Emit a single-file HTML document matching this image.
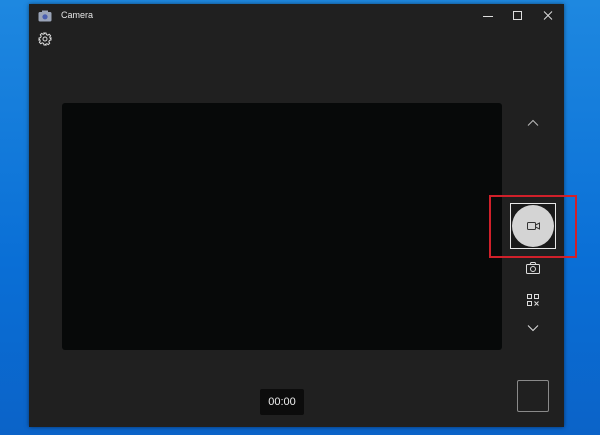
<!DOCTYPE html>
<html><head><style>
body{margin:0;width:600px;height:435px;overflow:hidden;background:linear-gradient(180deg,#1e88e0 0%,#0a6fd6 60%,#0b63c8 100%);font-family:"Liberation Sans",sans-serif;position:relative}
.win{position:absolute;left:29px;top:4px;width:535px;height:423px;background:#202020;box-shadow:0 0 4px rgba(0,0,0,.5)}
.a{position:absolute}
</style></head><body>
<div class="win"></div>
<!-- title -->
<svg class="a" style="left:38px;top:10px" width="14" height="12"><rect x="0.5" y="2" width="13" height="9.5" rx="1.5" fill="#9aa4b8"/><rect x="4" y="0.5" width="6" height="2" fill="#9aa4b8"/><circle cx="7" cy="6.8" r="2.6" fill="#4a5fb0"/></svg>
<div class="a" style="left:61px;top:10px;font-size:9px;color:#e6e6e6">Camera</div>
<svg class="a" style="left:480px;top:10px" width="80" height="12" stroke="#ddd" fill="none" stroke-width="1"><line x1="3" y1="6.5" x2="13" y2="6.5"/><rect x="33.5" y="1.5" width="8" height="8"/><path d="M64 1.5l8 8M72 1.5l-8 8"/></svg>
<!-- settings gear -->
<svg class="a" style="left:38px;top:32px" width="14" height="14" viewBox="0 0 14 14" fill="none" stroke="#ddd" stroke-width="1"><circle cx="7" cy="7" r="2"/><path d="M6 1h2l.4 1.6 1.4.6 1.4-.9 1.4 1.4-.9 1.4.6 1.4L13 6v2l-1.6.4-.6 1.4.9 1.4-1.4 1.4-1.4-.9-1.4.6L8 13H6l-.4-1.6-1.4-.6-1.4.9-1.4-1.4.9-1.4-.6-1.4L1 8V6l1.6-.4.6-1.4-.9-1.4 1.4-1.4 1.4.9 1.4-.6z"/></svg>
<!-- preview -->
<div class="a" style="left:62px;top:103px;width:440px;height:247px;background:#070909;border-radius:3px"></div>
<!-- up chevron -->
<svg class="a" style="left:527px;top:119px" width="12" height="8" fill="none" stroke="#bbb" stroke-width="1"><path d="M1 6.5l5-5 5 5"/></svg>
<!-- red box -->
<div class="a" style="left:489px;top:195px;width:84px;height:59px;border:2px solid #d0202a"></div>
<div class="a" style="left:510px;top:203px;width:44px;height:44px;border:1.5px solid #e8e8e8;background:#1a1a1a"></div>
<div class="a" style="left:512px;top:205px;width:42px;height:42px;border-radius:50%;background:#d4d4d4"></div>
<svg class="a" style="left:527px;top:221px" width="14" height="10" fill="none" stroke="#333" stroke-width="1"><rect x="0.5" y="1.5" width="8" height="7" rx="1"/><path d="M8.5 4l4-2v6l-4-2"/></svg>
<!-- photo icon -->
<svg class="a" style="left:526px;top:262px" width="14" height="12" fill="none" stroke="#ddd" stroke-width="1"><rect x="0.5" y="2.5" width="13" height="9" rx="1"/><path d="M4 2.5l1-2h4l1 2"/><circle cx="7" cy="7" r="2.5"/></svg>
<!-- qr -->
<svg class="a" style="left:527px;top:294px" width="12" height="12" fill="none" stroke="#ddd" stroke-width="1"><rect x="0.5" y="0.5" width="4" height="4"/><rect x="7.5" y="0.5" width="4" height="4"/><rect x="0.5" y="7.5" width="4" height="4"/><path d="M7.5 7.5l4 4M11.5 7.5l-4 4"/></svg>
<!-- down chevron -->
<svg class="a" style="left:527px;top:324px" width="12" height="8" fill="none" stroke="#ddd" stroke-width="1"><path d="M1 1.5l5 5 5-5"/></svg>
<!-- thumbnail -->
<div class="a" style="left:517px;top:380px;width:30px;height:30px;border:1px solid #8a8a8a;border-radius:2px"></div>
<!-- timer -->
<div class="a" style="left:260px;top:389px;width:44px;height:26px;background:#0c0c0c;border-radius:2px;color:#eee;font-size:11px;line-height:26px;text-align:center">00:00</div>
</body></html>
